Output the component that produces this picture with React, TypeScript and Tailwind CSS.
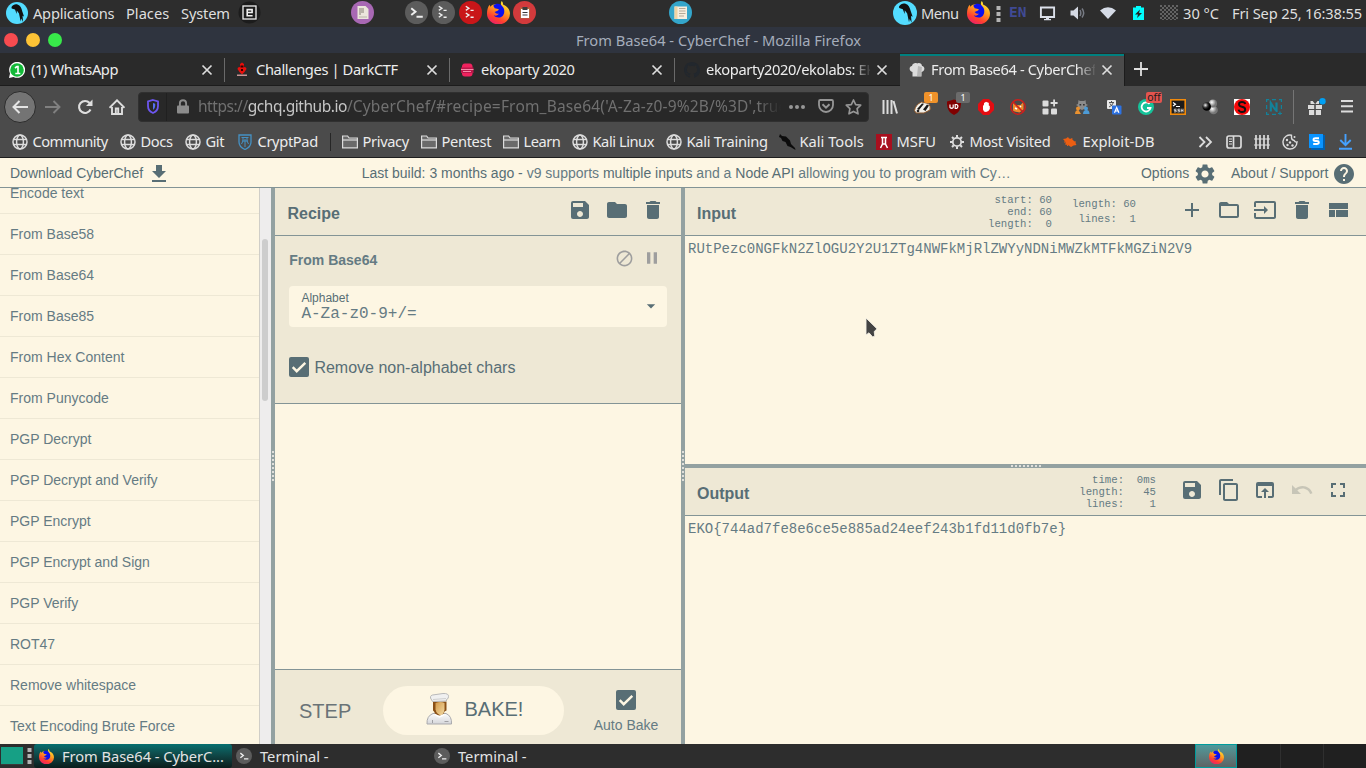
import React from "react";
import {
  MdSave, MdFolder, MdDelete, MdAdd, MdFolderOpen, MdInput, MdContentCopy, MdOpenInBrowser,
  MdUndo, MdFullscreen, MdSettings, MdHelp, MdPause, MdBlock, MdArrowDropDown,
} from "react-icons/md";

const UI = "font-['Noto_Sans',sans-serif]";
const SANS = "font-['Liberation_Sans',Arial,sans-serif]";
const MONO = "font-['Liberation_Mono','Courier_New',monospace]";

type P = { children?: React.ReactNode; c?: string };

/* A slot keeps its own width, so neighbours stay in place whatever it holds. */
const S = ({ children, c = "" }: P) => (
  <div className={"flex h-full shrink-0 items-center whitespace-pre " + c}>{children}</div>
);

const Firefox = ({ s = 22 }: { s?: number }) => (
  <svg width={s} height={s} viewBox="0 0 22 22" className="shrink-0">
    <defs>
      <linearGradient id="ff" x1="0.8" y1="0" x2="0.3" y2="1">
        <stop offset="0" stopColor="#fff03a" />
        <stop offset="0.4" stopColor="#ffa01e" />
        <stop offset="0.75" stopColor="#ff4030" />
        <stop offset="1" stopColor="#e8206a" />
      </linearGradient>
    </defs>
    <path d="M14 0c1 1 1.400 2 1.400 3.400C19 5 22 8 22 12a10.800 10.200 0 0 1-22 0c0-3 .6-6 2.400-8.400l.8 2C5 3.500 7 3 9 3.200l4.600 1C13 2.600 13.300 1 14 0z" fill="url(#ff)" />
    <path d="M6 4.500c2.500-2.700 7-2.500 8.600.6 2.400 2.200 2.600 6.500.6 9-2.400 2.600-7 2.200-8.700-.4 2 .8 4 .2 4.800-1.400-1.700-.1-3.300-.5-4-1.800l2.800-1.200c1.300-.5 1.500-1.300.5-1.600L7.400 7z" fill="#0a10f0" />
  </svg>
);

const Parrot = ({ s = 22 }: { s?: number }) => (
  <svg width={s} height={s} viewBox="0 0 22 22" className="shrink-0">
    <circle cx="11" cy="11" r="11" fill="#53dcff" />
    <path d="M5.500 5C7 2.500 9.500 1.800 11.500 2.500c2.800 1 4 3.500 4.800 7l1.700 5-1.500-.8.600 6.300-1.800-3.500-.6 3-1.700-8-2.200-3-.1 3.500-1.700-4.500-3.300-1z" fill="#111" />
  </svg>
);

const Term = ({ s = 22, fill = "#5c5c5c", two = false }: { s?: number; fill?: string; two?: boolean }) => (
  <svg width={s} height={s} viewBox="0 0 22 22" className="shrink-0" fill="none" stroke="#eee">
    <circle cx="11" cy="11" r="11" fill={fill} stroke="none" />
    {two ? (
      <path d="M6.500 5l3 2-3 2M6.500 11.500l3 2-3 2M11 9h3M11 15.500h3" strokeWidth="1.300" />
    ) : (
      <path d="M6 7l4 3.200-4 3.200M11 15h6" strokeWidth="1.900" />
    )}
  </svg>
);

const TopPanel = () => (
  <div className={"flex h-[27px] shrink-0 items-center bg-[#2d2d2d] pb-[2px] text-[14.67px] text-[#dfdfdf] " + UI}>
    <S c="w-[33px] pl-[6px]"><Parrot /></S>
    <S c="w-[93px] tracking-[-0.25px]">Applications</S>
    <S c="w-[55px]">Places</S>
    <S c="w-[57px] tracking-[-0.150px]">System</S>
    <S c="w-[113px]">
      <svg width="23" height="23" viewBox="0 0 23 23" fill="none" stroke="#f0f0f0">
        <circle cx="11.500" cy="11.500" r="11" fill="#1c1c1c" stroke="none" />
        <rect x="5" y="5" width="13" height="13" strokeWidth="1.300" />
        <path d="M9.200 11.500h4.900V8.600H9.200v6.100h5.400" strokeWidth="1.600" />
      </svg>
    </S>
    <S c="w-[54px]">
      <svg width="23" height="23" viewBox="0 0 23 23">
        <circle cx="11.500" cy="11.500" r="11.500" fill="#a868b4" />
        <path d="M6.500 5h8l3 3v10h-11z" fill="#ece6dc" />
        <path d="M8 7h5v5h-3v2H8zM8 15.500h8v1H8z" fill="#b9b3a8" />
      </svg>
    </S>
    <S c="w-[27px]"><Term s={23} /></S>
    <S c="w-[27px]"><Term s={23} two /></S>
    <S c="w-[28px]"><Term s={23} two fill="#c91619" /></S>
    <S c="w-[26px]"><Firefox s={23} /></S>
    <S c="w-[156px]">
      <svg width="23" height="23" viewBox="0 0 23 23">
        <circle cx="11.500" cy="11.500" r="11.500" fill="#d23a3c" />
        <rect x="7" y="6.500" width="10" height="11" fill="#b5673c" />
        <path d="M8 8h8v9H8z" fill="#fff" />
        <path d="M9.500 6h5v3h-5zM9.500 11h5v1h-5zM9.500 13.500h5v1h-5z" fill="#3c3c3c" />
      </svg>
    </S>
    <S c="w-[224px]">
      <svg width="23" height="23" viewBox="0 0 23 23">
        <circle cx="11.500" cy="11.500" r="11.500" fill="#34a6cb" />
        <path d="M5.500 5.500h12.500v12.500H5.500z" fill="#f7efdf" />
        <path d="M5.500 5.500h3v12.500h-3z" fill="#efd3a4" />
        <path d="M10 7.500h6.500M10 10h6.500M10 12.500h6.500M10 15h5" stroke="#b5aa98" />
      </svg>
    </S>
    <S c="w-[28px]"><Parrot s={24} /></S>
    <S c="w-[46px] tracking-[-0.5px]">Menu</S>
    <S c="w-[29px]"><Firefox s={23} /></S>
    <S c="w-[13px] pt-[2px]">
      <svg width="5" height="18" fill="#b4b4b4"><path d="M.5 1h4v4h-4zM.5 7h4v4h-4zM.5 13h4v4h-4z" /></svg>
    </S>
    <S c="w-[30px] font-['DejaVu_Sans_Mono',monospace] text-[14.500px] font-bold text-[#404a94]">EN</S>
    <S c="w-[31px]">
      <svg width="18" height="16" viewBox="0 0 18 16"><path d="M1.900 2.500h13.200v9.500H1.900z" fill="none" stroke="#dbe0ea" strokeWidth="1.900" /><path d="M7 12h3v2h2v1.200H5V14h2z" fill="#dbe0ea" /></svg>
    </S>
    <S c="w-[30px]">
      <svg width="16" height="14" viewBox="0 0 16 14"><path d="M.5 4.500h3L8 .5v13l-4.500-4h-3z" fill="#d5d9e3" /><path d="M10 4q1.600 3 0 6M12 2.500q3.400 4.500 0 9" stroke="#777b84" strokeWidth="1.500" fill="none" /></svg>
    </S>
    <S c="w-[33px]">
      <svg width="16" height="12" viewBox="0 0 16 12"><path d="M0 3.500Q8-3 16 3.500L8 12z" fill="#d5dbe6" /></svg>
    </S>
    <S c="w-[27px] pt-px">
      <svg width="11" height="14" viewBox="0 0 11 14"><path d="M3 0h5v1.500h3V14H0V1.500h3z" fill="#00fcfc" /><path d="M7 3.500L2 8.500h3L4 12l5-5H6z" fill="#222" /></svg>
    </S>
    <S c="w-[23px]">
      <svg width="18" height="15"><defs><pattern id="ck" width="4" height="4" patternUnits="userSpaceOnUse"><path d="M0 0h2v2H0zM2 2h2v2H2z" fill="#636363" /></pattern></defs><rect width="18" height="15" fill="url(#ck)" /></svg>
    </S>
    <S c="w-[49px]">30 °C</S>
    <S c="tracking-[-0.150px]">Fri Sep 25, 16:38:55</S>
  </div>
);

const Close = () => (
  <svg width="12" height="12" viewBox="0 0 12 12" stroke="#dcdcdc" strokeWidth="1.700"><path d="M1.500 1.500l9 9M10.500 1.500l-9 9" /></svg>
);

const Tab = ({ icon, title, active, sep, fade }: { icon: React.ReactNode; title: string; active?: boolean; sep?: boolean; fade?: boolean }) => (
  <div className={"flex h-full shrink-0 items-center pl-[9px] " + (active ? "w-[224px] border-t-2 border-[#008080] bg-[#4b4b4b] pb-[2px]" : "w-[225px] border-b border-[#1c1c1c]")}>
    <div className="flex w-[22px] shrink-0">{icon}</div>
    <div className={"mb-[2px] w-[164px] shrink-0 overflow-hidden whitespace-nowrap tracking-[-0.370px] " + (fade ? "[mask-image:linear-gradient(to_right,black_145px,transparent_166px)]" : "")}>{title}</div>
    <div className="ml-[6px] flex w-[12px]"><Close /></div>
    {sep && <div className="ml-[11px] h-[24px] w-px bg-[#6a6a6a]" />}
  </div>
);

const Tabs = () => (
  <div className={"flex h-[33px] shrink-0 items-stretch bg-[#2a2a2a] pt-px text-[14.67px] text-[#ececec] " + UI}>
    <Tab sep title="(1) WhatsApp" icon={
      <svg width="16" height="16" viewBox="0 0 16 16"><path d="M0 16l1-4.500A8 8 0 1 1 4.500 15z" fill="#fff" /><circle cx="8" cy="8" r="6.800" fill="#12b938" /><path d="M6 6l2-1.500h1v7M6.300 11.500h5" stroke="#fff" strokeWidth="1.600" fill="none" /></svg>} />
    <Tab sep title="Challenges | DarkCTF" icon={
      <svg width="16" height="16" viewBox="0 0 16 16"><path d="M6 2l2-1.500L10 2v3l2 .5.5 1.500-2 3L8 12.500 5.500 10l-2-3L4 5.500 6 5z" fill="#e8100c" /><path d="M6.500 3.500h3v2h-3zM7 7h2v2H7z" fill="#300" /><path d="M3 12.500h10v1.500H3z" fill="#c79696" /></svg>} />
    <Tab sep title="ekoparty 2020" icon={
      <svg width="16" height="16" viewBox="0 0 16 16"><path d="M3 6Q2.500 1.500 6 1.500h4.500Q14 1.500 13.500 6zM3 10.500Q2.500 14.500 6 14.500h4.500q3.500 0 3-4z" fill="#f0225e" /><path d="M2 5.500h12.500v5.500H2z" fill="#b9184a" /><path d="M2 7.500h12.500M4 9.500h8" stroke="#f58aa8" /></svg>} />
    <Tab fade title="ekoparty2020/ekolabs: EKO" icon={
      <svg width="16" height="16" viewBox="0 0 16 16" fill="#22272d"><path d="M8 0C3.580 0 0 3.580 0 8c0 3.540 2.290 6.530 5.470 7.590.4.070.55-.17.55-.38 0-.19-.01-.82-.01-1.490-2.010.37-2.530-.49-2.690-.94-.09-.23-.48-.94-.82-1.130-.28-.15-.68-.52-.01-.53.63-.01 1.080.58 1.230.82.72 1.210 1.870.87 2.330.66.07-.52.28-.87.51-1.070-1.780-.2-3.640-.89-3.640-3.950 0-.87.31-1.590.82-2.150-.08-.2-.36-1.020.08-2.120 0 0 .67-.21 2.200.82a7.500 7.500 0 0 1 4 0c1.530-1.040 2.200-.82 2.200-.82.44 1.100.16 1.920.08 2.120.51.56.82 1.270.82 2.150 0 3.070-1.870 3.750-3.650 3.950.29.25.54.73.54 1.480 0 1.070-.01 1.930-.01 2.200 0 .21.15.46.55.38A8 8 0 0 0 16 8c0-4.420-3.580-8-8-8z" /></svg>} />
    <Tab active fade title="From Base64 - CyberChef" icon={
      <svg width="16" height="16" viewBox="0 0 16 16"><path d="M3.500 10C0 9.500-.5 4.500 3 4c.5-3 4-3.500 5-2.500C10 0 13 1.500 13 4c3.500.5 3 5.500-.5 6v4.500h-9z" fill="#dcdcdc" /><path d="M9 4l4 1-1 9H8z" fill="#b6b6b6" /></svg>} />
    <div className="flex items-center border-l border-[#1c1c1c] pb-[2px] pl-[9px]">
      <svg width="14" height="14" stroke="#e0e0e0" strokeWidth="1.800"><path d="M7 0v14M0 7h14" /></svg>
    </div>
  </div>
);

const Ext = ({ children, badge }: P & { badge?: React.ReactNode }) => (
  <div className="relative flex h-full w-[32px] shrink-0 items-center justify-center">
    {children}
    {badge}
  </div>
);

const NavBar = () => (
  <div className={"flex h-[41px] shrink-0 items-center bg-[#4b4b4b] " + UI}>
    <div className="ml-[4px] flex size-[32px] shrink-0 items-center justify-center rounded-full border border-[#2c2c2c] bg-[#747474]">
      <svg width="17" height="14" viewBox="0 0 17 14" fill="none" stroke="#e4e4e4" strokeWidth="2"><path d="M16 7H1.500M7.500 1l-6 6 6 6" /></svg>
    </div>
    <S c="w-[32px] justify-center"><svg width="17" height="14" viewBox="0 0 17 14" fill="none" stroke="#808080" strokeWidth="1.900"><path d="M1 7h14.500M9.500 1l6 6-6 6" /></svg></S>
    <S c="w-[33px] justify-center">
      <svg width="16" height="16" viewBox="0 0 16 16"><path d="M13.500 10.500A6 6 0 1 1 12.600 4" fill="none" stroke="#dedede" strokeWidth="2.100" /><path d="M15.500.5V7H9z" fill="#dedede" /></svg>
    </S>
    <S c="w-[32px] justify-center">
      <svg width="16" height="16" viewBox="0 0 16 16" fill="none" stroke="#dedede" strokeWidth="1.900"><path d="M.5 8.800L8 1.300l7.500 7.500M3 8v7h10V8" /><path d="M6.800 15v-5.500h2.400V15" /></svg>
    </S>
    <div className="ml-[5px] flex h-[30px] w-[731px] shrink-0 items-center rounded-[4px] border border-[#303030] bg-[#282828] text-[15.500px]">
      <S c="w-[28px] justify-center border-r border-[#202020]">
        <svg width="12" height="15" viewBox="0 0 12 15"><path d="M6 1l5 1.500V7q0 5-5 7Q1 12 1 7V2.500z" fill="none" stroke="#6d56f0" strokeWidth="1.800" /><path d="M6 4l2.200.7V7q0 2.600-2.200 4z" fill="#5670f5" /></svg>
      </S>
      <S c="w-[31px] justify-center">
        <svg width="12" height="15" viewBox="0 0 12 15"><rect y="6.500" width="12" height="8" rx="1" fill="#8c8c8c" /><path d="M2.900 7V4.300a3.100 3.100 0 0 1 6.200 0V7" fill="none" stroke="#8c8c8c" strokeWidth="1.900" /></svg>
      </S>
      <div className="w-[583px] overflow-hidden whitespace-nowrap tracking-[0.170px] text-[#707070] [mask-image:linear-gradient(to_right,black_560px,transparent_583px)]">
        <span className="tracking-[-0.460px]">https://<span className="text-[#c6c6c6]">gchq.github.io</span></span>/CyberChef/#recipe=From_Base64('A-Za-z0-9%2B/%3D',true)
      </div>
      <S c="w-[32px] justify-center"><svg width="18" height="4" fill="#969696"><circle cx="3" cy="2" r="2" /><circle cx="9" cy="2" r="2" /><circle cx="15" cy="2" r="2" /></svg></S>
      <S c="w-[26px] justify-center">
        <svg width="16" height="15" viewBox="0 0 16 15" fill="none" stroke="#969696" strokeWidth="1.800"><path d="M2.200 1h11.600q1.200 0 1.200 1.200V6a7 7 0 0 1-14 0V2.200Q1 1 2.200 1z" /><path d="M4.500 5.200L8 8.600l3.500-3.400" strokeWidth="2" /></svg>
      </S>
      <S c="w-[28px] justify-center">
        <svg width="17" height="16" viewBox="0 0 17 16" fill="none" stroke="#969696" strokeWidth="1.700" strokeLinejoin="round"><path d="M8.500 1l2.200 4.600 5 .6-3.600 3.500.9 5.100-4.500-2.400L4 14.800l.9-5.100L1.300 6.200l5-.6z" /></svg>
      </S>
    </div>
    <div className="ml-[5px] flex h-full items-center">
      <Ext><svg width="16" height="14" viewBox="0 0 16 14" stroke="#dcdcdc" strokeWidth="2"><path d="M1.500 0v14M5.500 0v14M9.500 0v14M11.500 1l3.500 12.500" /></svg></Ext>
      <Ext badge={<span className="absolute left-[18px] top-[6px] flex h-[11px] w-[14px] items-center justify-center rounded-[2px] bg-[#f0922a] text-[9px] text-white">1</span>}>
        <svg width="17" height="15" viewBox="0 0 17 15"><path d="M.5 11.500q1-6 7-8.500l7 1.500q2.500 3 1.500 6.500L10 14H2z" fill="#f2f0ea" stroke="#8d582c" /><path d="M3 10L8 4.500l2 .3-5 6.200zM9 10.500l4-5 2 1-3.500 5.500z" fill="#191919" /><circle cx="4" cy="12" r="1.300" fill="#222" /></svg>
      </Ext>
      <Ext badge={<span className="absolute left-[18px] top-[6px] flex h-[11px] w-[14px] items-center justify-center rounded-[2px] bg-[#6b6b6b] text-[9px] text-white">1</span>}>
        <svg width="14" height="16" viewBox="0 0 14 16"><path d="M7 .5l7 2q.500 11-7 13.500Q-.5 13 0 2.500z" fill="#800000" /><path d="M3 5.500v3q1.700 1.500 3.200 0v-3M8.200 5.500h1.500q2.500 1.700 0 4H8.200z" fill="none" stroke="#fff" strokeWidth="1.200" /></svg>
      </Ext>
      <Ext>
        <svg width="16" height="16" viewBox="0 0 16 16"><path d="M5 0h6l5 5v6l-5 5H5l-5-5V5z" fill="#e40d12" /><path d="M5 5.500v5Q5.500 13 8 13t3.800-3V7l-1-.5V4L10 3.500 9 3.300 8 2.800 7 3.500 6 4v3z" fill="#fff" /></svg>
      </Ext>
      <Ext>
        <svg width="16" height="16" viewBox="0 0 16 16"><path d="M3 11.500V4l2.500 2h5L13.500 3v7.500l-4 3-5-1z" fill="#ef8a2c" /><path d="M5 9l2 1M10 8l1-1" stroke="#fff" strokeWidth="1.500" /><circle cx="8" cy="8" r="7.200" fill="none" stroke="#ce1f1c" strokeWidth="1.500" /><path d="M3 3l10 10" stroke="#ce1f1c" strokeWidth="1.500" /></svg>
      </Ext>
      <Ext>
        <svg width="16" height="16" viewBox="0 0 16 16" fill="#dcdcdc"><rect x=".5" y="1.500" width="6" height="6" rx="1" /><rect x=".5" y="9.500" width="6" height="6" rx="1" /><rect x="9" y="9.500" width="6" height="6" rx="1" /><path d="M11.200.5h1.800v2.600h2.600v1.800H13v2.600h-1.800V4.900H8.600V3.100h2.600z" /></svg>
      </Ext>
      <Ext>
        <svg width="16" height="16" viewBox="0 0 16 16"><path d="M4.500 1L6 2h4l1.500-1L12 5l2 1-2 1v2l-4 2-4-2V7L2 6l2-1z" fill="#8c8c8c" /><path d="M5.500 5h1.700v1.500H5.500zM9 5h1.700v1.500H9z" fill="#333" /><circle cx="4" cy="9.500" r="2" fill="#e9912f" /><path d="M1 15q0-4 3.500-4L7 15z" fill="#e9912f" /><circle cx="12" cy="9.500" r="2" fill="#4d9bd6" /><path d="M9 15q0-4 3.500-4 3 0 3 4z" fill="#4d9bd6" /></svg>
      </Ext>
      <Ext>
        <svg width="16" height="16" viewBox="0 0 16 16"><rect x="1" y="1" width="9" height="9" rx="1" fill="#e9e9e9" /><path d="M3 3.500h5M5.500 2v1.500M7.500 3.500Q6 7 3 8M4 4.500q1 2.500 4 3.500" stroke="#555" fill="none" /><rect x="6" y="6.500" width="9.500" height="9" rx="1" fill="#2d72e2" /><path d="M8.500 13.800l2.200-5.300 2.200 5.300M9.200 12h3" stroke="#fff" fill="none" strokeWidth="1.200" /></svg>
      </Ext>
      <Ext badge={<span className="absolute left-[16px] top-[6px] flex h-[11px] w-[16px] items-center justify-center rounded-[2px] bg-[#e3544f] text-[10.500px] leading-none text-[#1c1c1c]">off</span>}>
        <svg width="16" height="16" viewBox="0 0 16 16"><circle cx="8" cy="8" r="8" fill="#15c39a" /><path d="M11.500 5A4.500 4.500 0 1 0 12.500 9H9" fill="none" stroke="#fff" strokeWidth="1.800" /></svg>
      </Ext>
      <Ext>
        <svg width="16" height="16" viewBox="0 0 16 16"><rect x=".8" y=".8" width="14.400" height="14.400" fill="#1b1b1b" stroke="#f08a0c" strokeWidth="1.600" /><path d="M3 3.500l2.500 1.700L3 7M6 7.500h4" stroke="#fff" fill="none" strokeWidth="1.200" /><path d="M6.500 10.200H4.300v1.300h1.900v1.400H4M10 10.200H7.900v1.300h1.800v1.400H7.500M11.200 9.700v3.700M13 9.700v3.700M11.200 11.500H13" stroke="#ddd" fill="none" strokeWidth=".9" /></svg>
      </Ext>
      <Ext>
        <svg width="16" height="16" viewBox="0 0 16 16"><defs><radialGradient id="b1" cx=".35" cy=".35"><stop offset="0" stopColor="#fff" /><stop offset="1" stopColor="#777" /></radialGradient><radialGradient id="b2" cx=".35" cy=".35"><stop offset="0" stopColor="#eee" /><stop offset=".6" stopColor="#333" /><stop offset="1" stopColor="#000" /></radialGradient></defs><circle cx="11.500" cy="11" r="4.300" fill="url(#b1)" /><circle cx="11" cy="4.500" r="4" fill="url(#b1)" /><circle cx="4.700" cy="7.500" r="4.300" fill="url(#b2)" /></svg>
      </Ext>
      <Ext>
        <svg width="16" height="16" viewBox="0 0 16 16"><rect width="16" height="16" fill="#fff" /><circle cx="8" cy="8" r="8" fill="#f40808" /><path d="M11.300 5Q10.800 3 8 3 5 3 5 5.300q0 1.900 3 2.400 3.200.5 3.200 2.700Q11.200 13 8 13 5 13 4.600 10.700" fill="none" stroke="#111" strokeWidth="1.900" /></svg>
      </Ext>
      <Ext>
        <svg width="16" height="16" viewBox="0 0 16 16" fill="none" stroke="#12829a"><path d="M.6 3V.6H3M6 .6h4M13 .6h2.400V3M15.400 6v4M.6 6v4M.6 13v2.400H3M6 15.400h4M12 14.500h4M14 12.500v4" strokeWidth="1.200" /><path d="M4.800 12.500V4q5 8 5.700 8V3.500" strokeWidth="2.200" /></svg>
      </Ext>
      <div className="ml-[3px] h-[34px] w-px bg-[#757575]" />
      <div className="ml-[6px] flex h-full w-[32px] items-center justify-center">
        <svg width="19" height="18" viewBox="0 0 19 18" fill="#dcdcdc"><path d="M1 7h6.200v4H1zM8.800 7H15v4H8.800zM2 12h5.200v5H2zM8.800 12H14v5H8.800zM3.500 3h2.200L8 6h.3l2.200-3H12v3H3.500z" /><circle cx="15.500" cy="3.200" r="3.200" fill="#00a0f4" /></svg>
      </div>
      <div className="flex h-full w-[30px] items-center justify-center">
        <svg width="12" height="13" fill="#dcdcdc"><path d="M0 0h12v2H0zM0 5.300h12v2H0zM0 10.600h12v2H0z" /></svg>
      </div>
    </div>
  </div>
);

const Globe = () => (
  <svg width="16" height="16" viewBox="0 0 16 16" fill="none" stroke="#dcdcdc" strokeWidth="1.500"><circle cx="8" cy="8" r="7" /><ellipse cx="8" cy="8" rx="3.400" ry="7" /><path d="M1.500 5.500h13M1.500 10.500h13" /></svg>
);
const Fold = () => (
  <svg width="16" height="14" viewBox="0 0 16 14" fill="#6a6a6a" stroke="#dcdcdc" strokeWidth="1.200"><path d="M.6 12.800V1h5l1.500 2h8.300v9.800z" /><path d="M.6 5h14.800" /></svg>
);
const Mark = ({ icon, children, c }: P & { icon: React.ReactNode }) => (
  <div className={"flex h-full shrink-0 items-center whitespace-nowrap " + c}>
    <div className="flex w-[20.500px] shrink-0 items-center">{icon}</div>
    <span className="mb-[2px]">{children}</span>
  </div>
);

const Bookmarks = () => (
  <div className={"flex h-[31px] shrink-0 items-center border-b border-[#1e1e1e] bg-[#4b4b4b] pl-[12px] text-[14.67px] tracking-[-0.350px] text-[#ececec] " + UI}>
    <Mark c="w-[108px] tracking-[-0.550px]" icon={<Globe />}>Community</Mark>
    <Mark c="w-[65px]" icon={<Globe />}>Docs</Mark>
    <Mark c="w-[52px]" icon={<Globe />}>Git</Mark>
    <Mark c="w-[93px]" icon={<svg width="16" height="16" viewBox="0 0 16 16" fill="none" stroke="#4591c4"><path d="M2 1h12v7q0 5-6 7.500Q2 13 2 8z" strokeWidth="1.300" /><path d="M4.500 3.500h7M6 3.500V7l-1.500 3M10 3.500V7l1.500 3M8 5v8M5 7h6" /></svg>}>CryptPad</Mark>
    <div className="mr-[11px] h-[18px] w-px bg-[#262626]" />
    <Mark c="w-[79px]" icon={<Fold />}>Privacy</Mark>
    <Mark c="w-[82px]" icon={<Fold />}>Pentest</Mark>
    <Mark c="w-[69px] tracking-[-0.5px]" icon={<Fold />}>Learn</Mark>
    <Mark c="w-[94px] tracking-[-0.450px]" icon={<Globe />}>Kali Linux</Mark>
    <Mark c="w-[113px] tracking-[-0.270px]" icon={<Globe />}>Kali Training</Mark>
    <Mark c="w-[97px] tracking-[0px]" icon={<svg width="17" height="16" viewBox="0 0 17 16"><path d="M1 0l2 2 4 .5 4 4 1 3.500 4 4 .500 2-5-3-3-1-2-4-3-1L2 4 0 3z" fill="#0c0c0c" /></svg>}>Kali Tools</Mark>
    <Mark c="w-[73px] tracking-[-0.050px]" icon={<svg width="16" height="16"><path d="M0 0h16v16H0z" fill="#a80f1e" /><path d="M5 3.500h6M6.500 4v6l-2 4M9.500 4v6l2 4M6 10h4" stroke="#fff" strokeWidth="1.500" fill="none" /></svg>}>MSFU</Mark>
    <Mark c="w-[113px] tracking-[-0.270px]" icon={<svg width="16" height="16" viewBox="0 0 16 16" fill="none" stroke="#dcdcdc"><circle cx="8" cy="8" r="4.200" strokeWidth="1.800" /><path d="M8 1v2.500M8 12.500V15M1 8h2.500M12.500 8H15M3 3l1.800 1.800M11.200 11.200L13 13M13 3l-1.800 1.800M4.800 11.200L3 13" strokeWidth="2" /></svg>}>Most Visited</Mark>
    <Mark c="w-[136px] tracking-[0.050px]" icon={<svg width="16" height="16" viewBox="0 0 16 16"><path d="M1 5l3-.5L6 3l1 1.500 3 .5 3 3 1.500 3-3 .5L9 13 6 11l-3-.5L4 8.500z" fill="#ec5e12" /><path d="M2 8h4M5 12l2-2M10 4l-1 3M14 8h-4" stroke="#ec5e12" /></svg>}>Exploit-DB</Mark>
    <S c="w-[28px]"><svg width="15" height="12" viewBox="0 0 15 12" fill="none" stroke="#dcdcdc" strokeWidth="1.800"><path d="M1.500 1l5 5-5 5M8 1l5 5-5 5" /></svg></S>
    <S c="w-[28px]"><svg width="16" height="14" viewBox="0 0 16 14" fill="none" stroke="#dcdcdc" strokeWidth="1.700"><rect x="1" y="1" width="14" height="12" rx="2" /><path d="M7.500 1v12" /><path d="M3 4h3M3 6.500h3M3 9h3" strokeWidth="1.200" /></svg></S>
    <S c="w-[28px]"><svg width="16" height="14" viewBox="0 0 16 14" stroke="#dcdcdc" strokeWidth="1.700"><path d="M2 0v14M6 0v14M10 0v14M14 0v14" /><path d="M0 4h16M0 10h16" strokeWidth="1.200" /></svg></S>
    <S c="w-[27px]"><svg width="16" height="16" viewBox="0 0 16 16" fill="#dcdcdc"><path d="M9.500 1.200A7 7 0 1 0 15 8q-2 .5-2.800-1.500Q9.500 6 9.500 3.500z" fill="none" stroke="#dcdcdc" strokeWidth="1.400" /><circle cx="5" cy="6" r="1.200" /><circle cx="8" cy="8.500" r="1.200" /><circle cx="5.500" cy="11" r="1.200" /><circle cx="10.500" cy="11.500" r="1.200" /><circle cx="12.500" cy="3" r="1" /></svg></S>
    <S c="w-[30px]"><svg width="16" height="16" viewBox="0 0 16 16"><path d="M1 1h15v15H2z" fill="#0060b0" /><path d="M0 0h14v14H0z" fill="#0a94ff" /><path d="M10 4.200H6.500q-2 0-2 1.500T6.500 7h1.300q2 0 2 1.500T7.800 10H4.200" stroke="#fff" strokeWidth="1.900" fill="none" /></svg></S>
    <S><svg width="13" height="16" viewBox="0 0 13 16" fill="none" stroke="#45a1ff" strokeWidth="1.900"><path d="M6.500 0v11M1.300 6l5.200 5.200L11.700 6M0 14.800h13" /></svg></S>
  </div>
);

const OPS = ["Encode text", "From Base58", "From Base64", "From Base85", "From Hex Content", "From Punycode", "PGP Decrypt", "PGP Decrypt and Verify", "PGP Encrypt", "PGP Encrypt and Sign", "PGP Verify", "ROT47", "Remove whitespace", "Text Encoding Brute Force"];

const DotsV = () => (
  <div className="flex flex-col gap-[2px]">
    {[0, 1, 2, 3, 4, 5, 6, 7].map((i) => <i key={i} className="block size-[2px] bg-[#dfdfdb]" />)}
  </div>
);
const GutterV = () => (
  <div className="flex w-[4px] shrink-0 items-center justify-center bg-[#93a1a1]"><DotsV /></div>
);

const Banner = () => (
  <div className="flex h-[30px] shrink-0 items-center border-b border-[#839496] bg-[#fdf6e3] pl-[10px] text-[14px] text-[#586e75]">
    <S c="w-[137px] pt-[2px]">Download CyberChef</S>
    <S c="w-[214.700px] pt-[2px]"><svg width="24" height="24" fill="currentColor"><path d="M19 9h-4V3H9v6H5l7 7 7-7zM5 18v2h14v-2H5z" /></svg></S>
    <S c="w-[779.300px] pt-[2px] text-[#657b83]"><span className="text-[#586e75]">Last build: 3 months ago - </span>v9 supports <span className="text-[#586e75]">multiple inputs</span> and a <span className="text-[#586e75]">Node API</span> allowing you to program with Cy…</S>
    <S c="w-[52px] pt-[2px]">Options</S>
    <S c="w-[38px] pt-[2px]"><MdSettings size={24} /></S>
    <S c="w-[101px] pt-[2px]">About / Support</S>
    <S c="pt-[2px]"><MdHelp size={24} /></S>
  </div>
);

const Check = ({ c = "" }: { c?: string }) => (
  <svg width="20" height="20" viewBox="0 0 20 20" className={"shrink-0 " + c}><rect width="20" height="20" rx="2" fill="#586e75" /><path d="M3.700 10.200l4 4L16.300 5.800" fill="none" stroke="#fdf6e3" strokeWidth="2.400" /></svg>
);

const Recipe = () => (
  <div className="flex w-[406px] shrink-0 flex-col bg-[#fdf6e3]">
    <div className="flex h-[48px] shrink-0 items-center border-b border-[#839496] bg-[#eee8d5] text-[#586e75]">
      <S c="w-[293px] pl-[12.500px] pt-[5px] text-[16px] font-bold">Recipe</S>
      <S c="w-[37px] pb-[3px]"><MdSave size={24} /></S>
      <S c="w-[36px] pb-[3px]"><MdFolder size={24} /></S>
      <S c="pb-[3px]"><MdDelete size={24} /></S>
    </div>
    <div className="flex h-[168px] shrink-0 flex-col border-b border-[#839496] bg-[#eee8d5] pl-[14px] pr-[14px]">
      <div className="flex h-[50px] items-center">
        <div className="mb-[2px] w-[325.500px] pl-[0.300px] text-[14px] font-bold text-[#657b83]">From Base64</div>
        <MdBlock size={19} color="#9e9e9e" className="mb-[6px]" />
        <MdPause size={20} color="#9e9e9e" className="mb-[6px] ml-[8px]" />
      </div>
      <div className="flex h-[41px] w-[378px] items-center justify-between rounded-[4px] bg-[#fdf6e3] pl-[12px] pr-[6px]">
        <div className="flex flex-col pl-[0.400px] pt-[2px] text-[#657b83]">
          <span className="text-[12px] leading-[14px] text-[#586e75]">Alphabet</span>
          <span className={"text-[16px] leading-[19px] " + MONO}>A-Za-z0-9+/=</span>
        </div>
        <MdArrowDropDown size={20} color="#586e75" className="mb-[2px]" />
      </div>
      <div className="mt-[27px] flex items-center text-[16px] text-[#586e75]">
        <Check c="mr-[5.400px]" /><span className="pt-[2px] leading-[24px]">Remove non-alphabet chars</span>
      </div>
    </div>
    <div className="min-h-0 flex-1" />
    <div className="flex h-[75px] shrink-0 border-t border-[#839496] bg-[#eee8d5]">
      <div className="w-[108px] pl-[24px] pt-[28px] text-[20px] leading-[27px] text-[#6a7377]">STEP</div>
      <div className="mt-[16px] flex h-[49px] w-[181px] items-center rounded-full bg-[#fdf6e3] pb-[3px] pl-[40px] text-[20px] text-[#586e75]">
        <svg width="32" height="32" viewBox="0 0 32 32" className="mr-[9.500px]">
          <defs>
            <linearGradient id="coat" x1="0" y1="0" x2="0" y2="1"><stop offset="0" stopColor="#fcfcfc" /><stop offset="1" stopColor="#d5d6da" /></linearGradient>
            <linearGradient id="face" x1="0" y1="0" x2="1" y2="1"><stop offset="0" stopColor="#d39a4a" /><stop offset="1" stopColor="#f3dba4" /></linearGradient>
          </defs>
          <path d="M4 31q-.5-8 6-10.500h13Q29 23 28.500 31z" fill="url(#coat)" stroke="#a9a9ad" />
          <path d="M10 8.500h13.500v9l-2 1-1.500 4h-7l-2-4-1-1z" fill="#8a5016" />
          <path d="M12.500 10q5-2 9 0v6.500q-.5 4-3 6-5-1-6-6z" fill="url(#face)" />
          <path d="M12 21.500l4.500 2.500 4.500-2.500" fill="none" stroke="#fff" strokeWidth="1.500" />
          <path d="M9.500 8.500L7.500 5Q7 2 11 1.800l9-1.300q6-.3 5.500 3.200Q25.500 6 23.500 6.500V8z" fill="#f0f0f0" stroke="#b8b8b8" />
          <path d="M10 6.500l13-1" stroke="#cfcfcf" />
          <path d="M9.500 30v-3M21.500 28.500h4" stroke="#a0a0a4" />
        </svg>
        BAKE!
      </div>
      <div className="ml-[16px] flex w-[92px] flex-col items-center pt-[20px] text-[14px] text-[#657b83]">
        <Check />
        <span className="mt-[5px] leading-[20px]">Auto Bake</span>
      </div>
    </div>
  </div>
);

const IO = () => (
  <div className="flex min-w-0 flex-1 flex-col bg-[#fdf6e3]">
    <div className="flex h-[48px] shrink-0 items-center border-b border-[#839496] bg-[#eee8d5] text-[#586e75]">
      <S c="w-[267px] pl-[12px] pt-[5px] text-[16px] font-bold">Input</S>
      <pre className={"w-[100px] text-right text-[10.670px] leading-[12px] text-[#657b83] " + MONO}>{"start: 60\nend: 60\nlength:  0"}</pre>
      <pre className={"w-[84px] text-right text-[10.670px] leading-[15px] text-[#657b83] " + MONO}>{"length: 60\nlines:  1"}</pre>
      <S c="ml-[44px] w-[37px] pb-[3px]"><MdAdd size={24} /></S>
      <S c="w-[36px] pb-[3px]"><MdFolderOpen size={24} /></S>
      <S c="w-[37px] pb-[3px]"><MdInput size={24} /></S>
      <S c="w-[36px] pb-[3px]"><MdDelete size={24} /></S>
      <S c="pb-[3px]"><svg width="24" height="24" fill="currentColor"><path d="M3 19h6v-7H3v7zm7 0h12v-7H10v7zM3 5v6h19V5H3z" /></svg></S>
    </div>
    <div className={"h-[228px] shrink-0 pl-[3px] pt-[5px] text-[14px] leading-[17px] text-[#657b83] " + MONO}>RUtPezc0NGFkN2ZlOGU2Y2U1ZTg4NWFkMjRlZWYyNDNiMWZkMTFkMGZiN2V9</div>
    <div className="flex h-[4px] shrink-0 items-center justify-center gap-[2px] bg-[#93a1a1]">
      {[0, 1, 2, 3, 4, 5, 6, 7].map((i) => <i key={i} className="block size-[2px] bg-[#dfdfdb]" />)}
    </div>
    <div className="flex h-[48px] shrink-0 items-center border-b border-[#839496] bg-[#eee8d5] text-[#586e75]">
      <S c="w-[371px] pl-[12px] pt-[5px] text-[16px] font-bold">Output</S>
      <pre className={"w-[100px] text-right text-[10.670px] leading-[12px] text-[#657b83] " + MONO}>{"time:  0ms\nlength:   45\nlines:    1"}</pre>
      <S c="ml-[24px] w-[37px] pb-[3px]"><MdSave size={24} /></S>
      <S c="w-[36px] pb-[3px]"><MdContentCopy size={24} /></S>
      <S c="w-[37px] pb-[3px]"><MdOpenInBrowser size={24} /></S>
      <S c="w-[36px] pb-[3px]"><MdUndo size={24} color="#c7c5b7" /></S>
      <S c="pb-[3px]"><MdFullscreen size={24} /></S>
    </div>
    <div className={"pl-[3px] pt-[5px] text-[14px] leading-[17px] text-[#657b83] " + MONO}>{"EKO{744ad7fe8e6ce5e885ad24eef243b1fd11d0fb7e}"}</div>
  </div>
);

const Taskbar = () => (
  <div className={"flex h-[24px] shrink-0 items-center bg-[#2d2d2d] text-[14.67px] text-[#e4e4e4] " + UI}>
    <S c="w-[27px] pl-px"><div className="h-[18px] w-[22px] border-b border-[#3a3a3a] bg-[#16a085]" /></S>
    <S c="w-[7px]"><svg width="5" height="18" fill="#b4b4b4"><path d="M.5 1h4v4h-4zM.5 7h4v4h-4zM.5 13h4v4h-4z" /></svg></S>
    <S c="w-[198px] rounded-[3px] bg-linear-to-b from-[#067070] to-[#0a1d1c] pl-[5px]">
      <Firefox s={15} /><span className="pb-px pl-[8px] tracking-[-0.050px]">From Base64 - CyberC...</span>
    </S>
    <S c="w-[198px] pl-[4px]"><Term s={16} /><span className="pb-px pl-[8px]">Terminal -</span></S>
    <S c="w-[765px] pl-[4px]"><Term s={16} /><span className="pb-px pl-[8px]">Terminal -</span></S>
    <S c="w-[42px] justify-center border border-[#009c9c] bg-linear-to-b from-[#4d9a9c] to-[#5c6464]"><Firefox s={15} /></S>
    <S c="w-[44px] border-r border-[#2f2f2f] bg-[#202020]" />
    <S c="w-[43px] border-r border-[#2f2f2f] bg-[#202020]" />
    <S c="w-[43px] bg-[#202020]" />
  </div>
);

export default function App() {
  return (
    <div className="relative flex h-[768px] w-[1366px] flex-col overflow-hidden bg-[#2d2d2d]">
      <TopPanel />
      <div className={"flex h-[26px] shrink-0 items-center bg-[#2f343f] text-[14.67px] text-[#a5adbb] " + UI}>
        <S c="w-[576px] gap-[8px] pl-[4px]">
          <i className="block size-[14px] rounded-full bg-[#f74b50]" />
          <i className="block size-[14px] rounded-full bg-[#fdc336]" />
          <i className="block size-[14px] rounded-full bg-[#38e94a]" />
        </S>
        <S>From Base64 - CyberChef - Mozilla Firefox</S>
      </div>
      <Tabs />
      <NavBar />
      <Bookmarks />
      <div className={"flex min-h-0 flex-1 flex-col " + SANS}>
        <Banner />
        <div className="flex min-h-0 flex-1">
          <div className="flex w-[260px] shrink-0 flex-col justify-end overflow-hidden border-r border-[#d0cec8] bg-[#fdf6e3] text-[14px] text-[#657b83]">
            <div className="-mb-[3px]">
              {OPS.map((o) => <div key={o} className="flex h-[41px] items-center border-b border-[#eee8d5] pl-[10px]">{o}</div>)}
            </div>
          </div>
          <div className="w-[11px] shrink-0 bg-[#eeeded] pl-[2px] pt-[51px]">
            <div className="h-[162px] w-[6px] rounded-full bg-[#cdcdcd]" />
          </div>
          <GutterV />
          <Recipe />
          <GutterV />
          <IO />
        </div>
      </div>
      <Taskbar />
      <svg width="14" height="22" viewBox="0 0 14 22" className="absolute left-[865px] top-[317px]">
        <path d="M1 1v17l3-2.200L7.700 20l2.100-1-.6-4.400L12 11.800z" fill="#444" stroke="#f4f0e6" strokeWidth=".9" />
      </svg>
    </div>
  );
}
